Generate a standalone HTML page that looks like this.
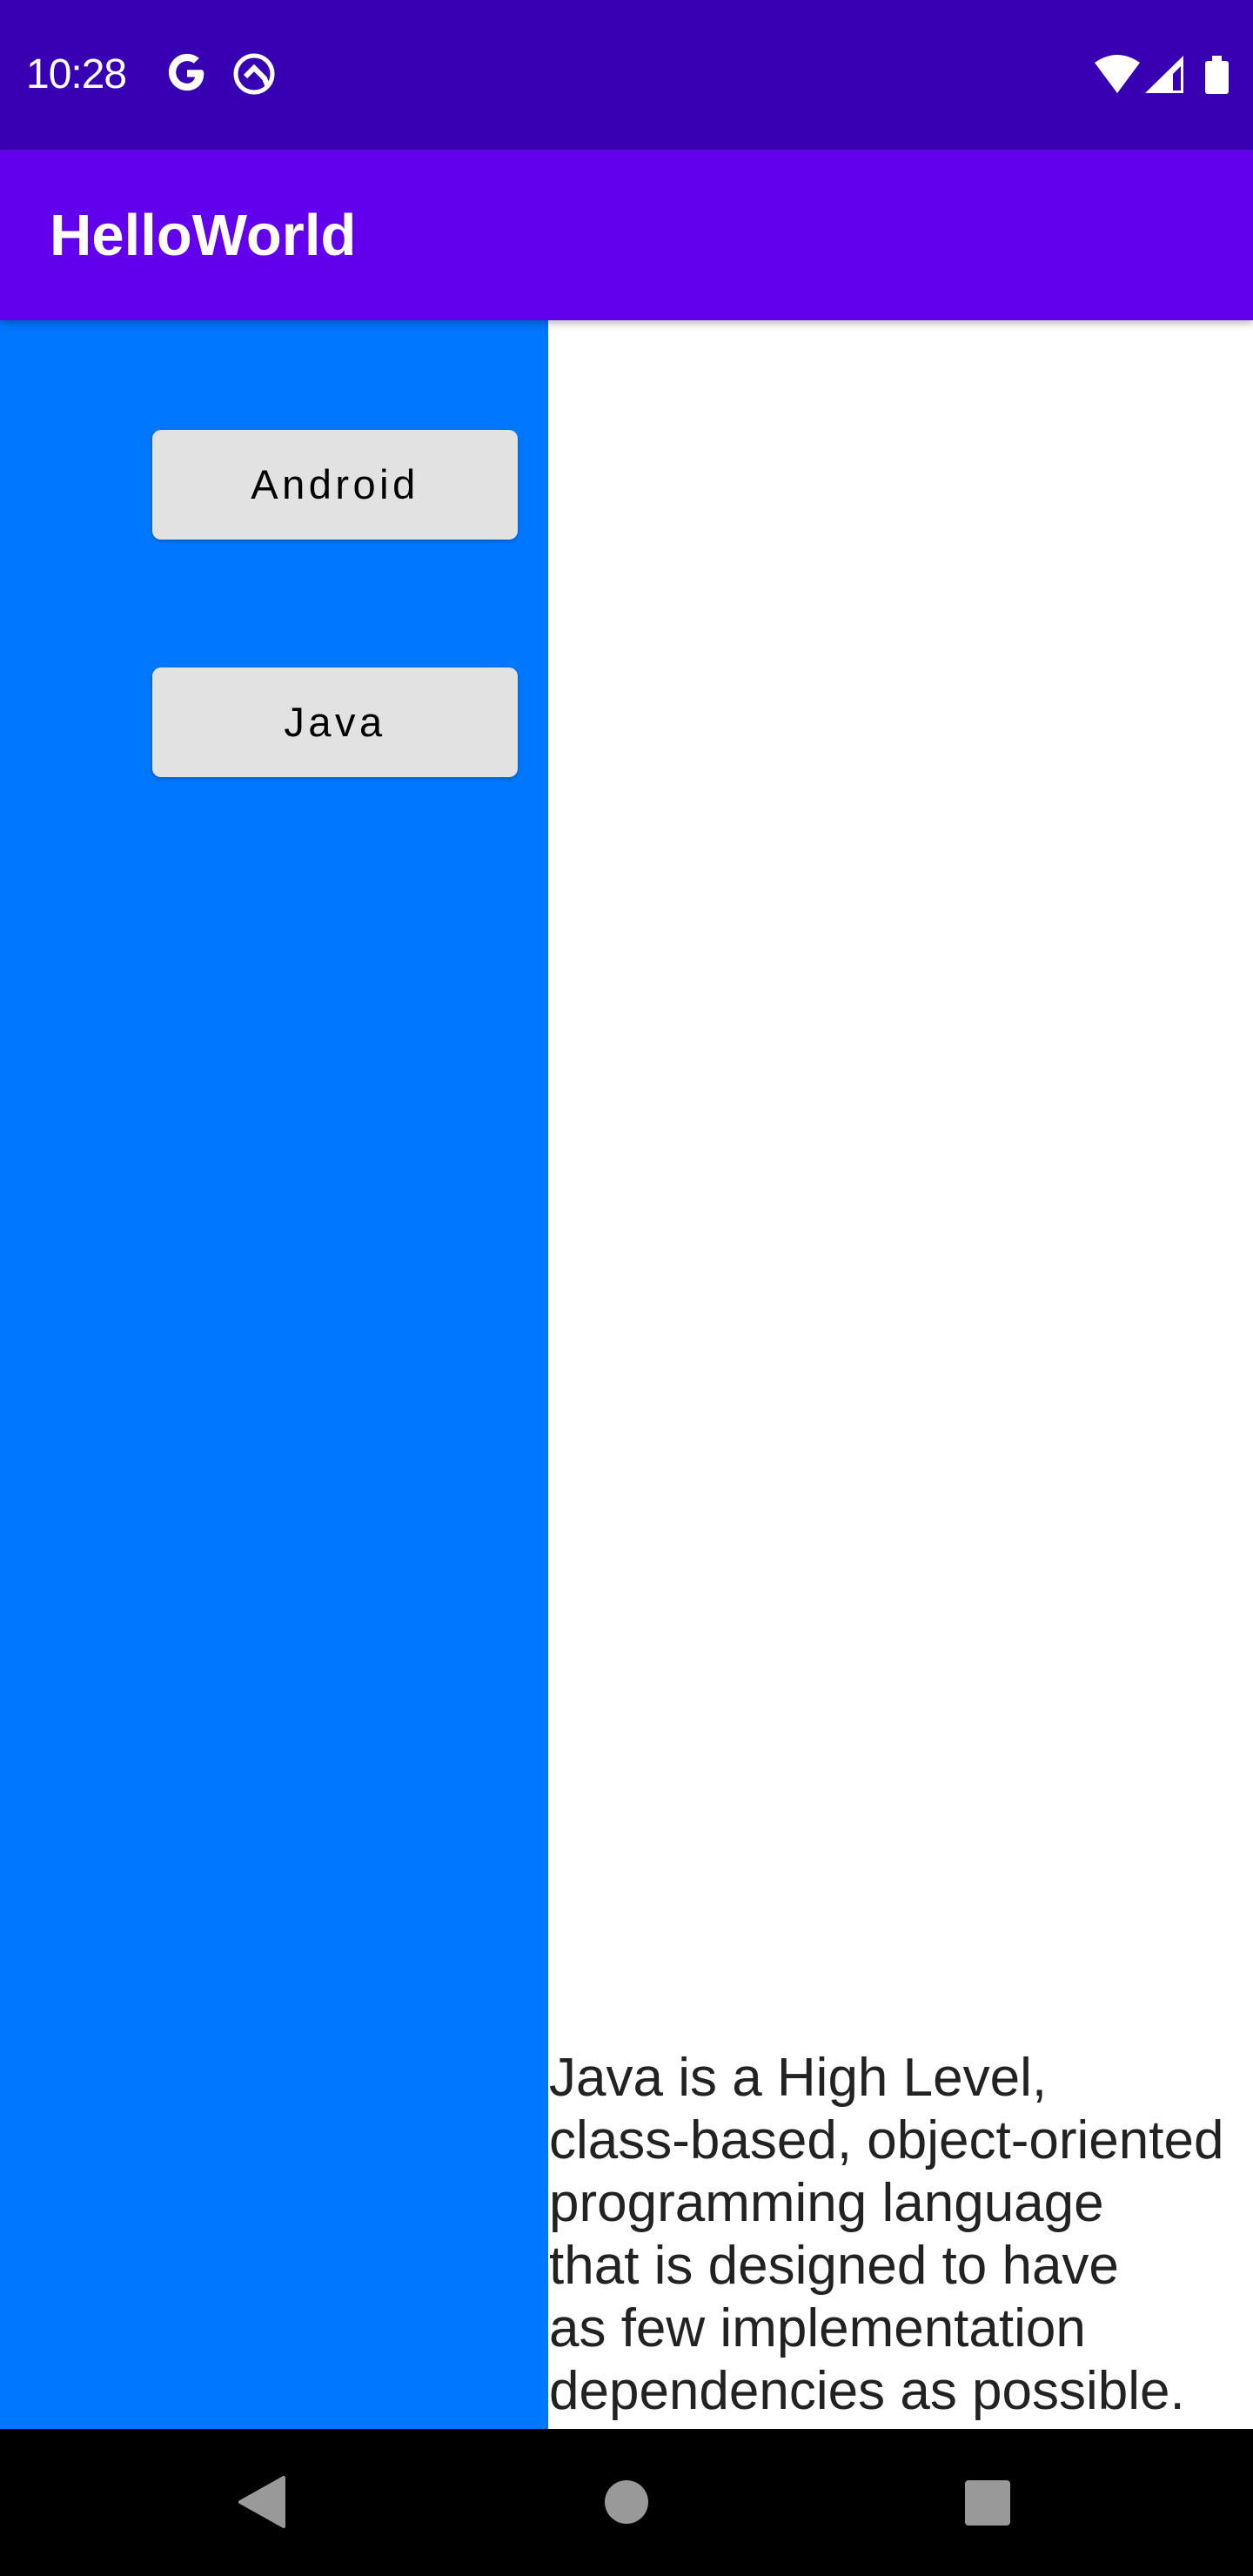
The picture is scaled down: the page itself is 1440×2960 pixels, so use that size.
<!DOCTYPE html>
<html><head><meta charset="utf-8"><style>
html,body{margin:0;padding:0;width:1440px;height:2960px;overflow:hidden;background:#fff;font-family:"Liberation Sans",sans-serif;}
.sb{position:absolute;left:0;top:0;width:1440px;height:172px;background:#3700b3;}
.ab{position:absolute;left:0;top:172px;width:1440px;height:196px;background:#6200ee;box-shadow:0 4px 8px rgba(0,0,0,0.25);z-index:2;}
.blue{position:absolute;left:0;top:368px;width:630px;height:2423px;background:#0077ff;}
.btn{position:absolute;left:175px;width:420px;height:126px;background:#e2e2e2;border-radius:10px;box-shadow:0 2px 4px rgba(0,0,0,0.25);font-size:47px;letter-spacing:4.5px;color:#000;text-align:center;line-height:126px;font-weight:500;}
.txt{position:absolute;left:631px;top:2352px;font-size:62px;line-height:72px;color:#222;white-space:nowrap;}
.nav{position:absolute;left:0;top:2791px;width:1440px;height:169px;background:#000;}
</style></head><body>
<div class="sb">
<div style="position:absolute;left:30px;top:58px;font-size:48px;color:#fff;letter-spacing:-1px;">10:28</div>
<svg style="position:absolute;left:190px;top:60px" width="50" height="50" viewBox="0 0 50 50"><path d="M44 22H25v9h10c-1.5 5-5 8-10 8a14 14 0 1 1 8.5-25.2l6.5-6.3A23 23 0 1 0 25 48c12 0 21-8.5 21-21.5 0-1.5-.5-3-2-4.5z" fill="#fff" transform="translate(2,0) scale(0.92)"/></svg>
<svg style="position:absolute;left:266px;top:60px" width="54" height="52" viewBox="0 0 54 52"><circle cx="26" cy="25" r="21" fill="none" stroke="#fff" stroke-width="5"/><path d="M16 28 L26 18 L38 30 L42 40" fill="none" stroke="#fff" stroke-width="6"/></svg>
<svg style="position:absolute;left:1256px;top:62px" width="160" height="48" viewBox="0 0 160 48"><path d="M2 10 Q28 -8 54 10 L28 45 Z" fill="#fff"/><path d="M60 45 L104 2 L104 45 Z" fill="#fff"/><path d="M92 42 L92 23 L101 14 L101 42 Z" fill="#3700b3"/><rect x="129" y="8" width="27" height="38" rx="3" fill="#fff"/><rect x="137" y="2" width="11" height="8" fill="#fff"/></svg>
</div>
<div class="ab"><div style="position:absolute;left:57px;top:60px;font-size:67px;font-weight:bold;color:#fff;">HelloWorld</div></div>
<div class="blue"></div>
<div class="btn" style="top:494px">Android</div>
<div class="btn" style="top:767px">Java</div>
<div class="txt">Java is a High Level,<br>class-based, object-oriented<br>programming language<br>that is designed to have<br>as few implementation<br>dependencies as possible.</div>
<div class="nav">
<svg style="position:absolute;left:270px;top:52px" width="60" height="64" viewBox="0 0 60 64"><path d="M56 4 L56 60 L6 32 Z" fill="#999" stroke="#999" stroke-width="4" stroke-linejoin="round"/></svg>
<div style="position:absolute;left:695px;top:59px;width:50px;height:50px;border-radius:50%;background:#999;"></div>
<div style="position:absolute;left:1109px;top:59px;width:52px;height:52px;border-radius:4px;background:#999;"></div>
</div>
</body></html>
